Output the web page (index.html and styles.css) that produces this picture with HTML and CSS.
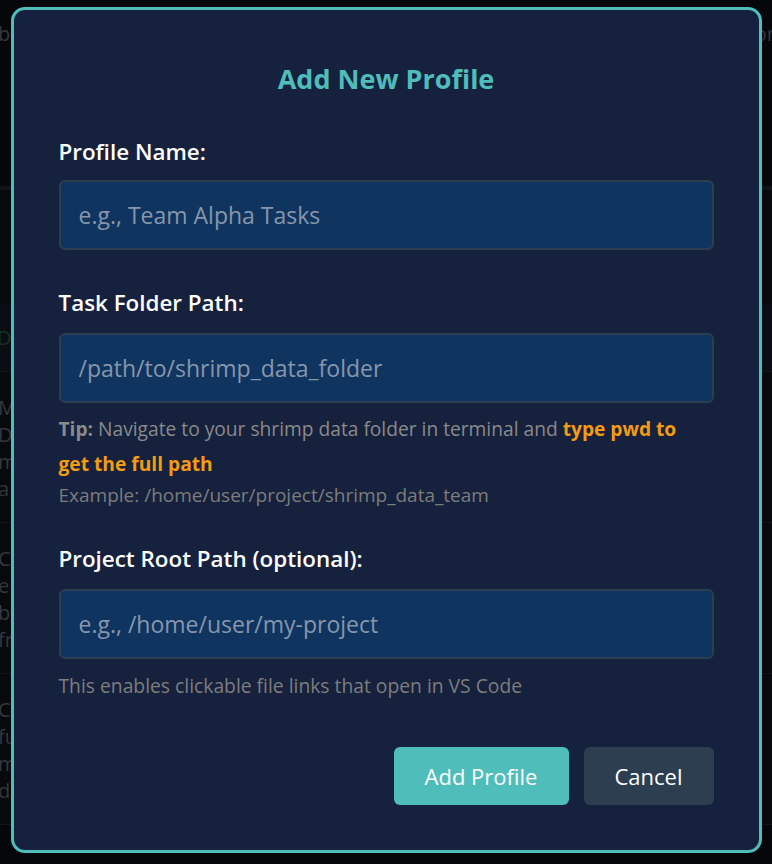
FILE: index.html
```html
<!DOCTYPE html>
<html lang="en">
<head>
<meta charset="utf-8">
<title>Add New Profile</title>
<link rel="stylesheet" href="styles.css">
</head>
<body>
<div class="page">
  <div class="intro">
    <span>b</span>
    <span>or</span>
  </div>
  <div class="panel">
    <div class="panel-head"></div>
    <div class="tab-row"><span class="tab-label">D</span></div>
    <div class="task">
      <p>M</p><p>D</p><p>m</p><p>a</p>
    </div>
    <div class="task">
      <p>C</p><p>e</p><p>b</p><p>fr</p>
    </div>
    <div class="task">
      <p>C</p><p>fu</p><p>m</p><p>d</p>
    </div>
  </div>
  <div class="footer-row">
    <span class="footer-text">Register the new loads on a project</span>
    <span class="footer-btn"></span>
  </div>
</div>

<div class="overlay">
  <div class="modal">
    <h2 class="modal-title">Add New Profile</h2>

    <div class="field">
      <label class="field-label label-first">Profile Name:</label>
      <input class="field-input" type="text" placeholder="e.g., Team Alpha Tasks">
    </div>

    <div class="field">
      <label class="field-label label-second">Task Folder Path:</label>
      <input class="field-input" type="text" placeholder="/path/to/shrimp_data_folder">
      <p class="tip"><strong class="tip-key">Tip:</strong> Navigate to your shrimp data folder in terminal and <strong class="tip-hl">type pwd to get the full path</strong></p>
      <p class="hint">Example: /home/user/project/shrimp_data_team</p>
    </div>

    <div class="field">
      <label class="field-label label-third">Project Root Path (optional):</label>
      <input class="field-input" type="text" placeholder="e.g., /home/user/my-project">
      <p class="hint hint-gap">This enables clickable file links that open in VS Code</p>
    </div>

    <div class="actions">
      <button class="btn btn-primary">Add Profile</button>
      <button class="btn btn-secondary">Cancel</button>
    </div>
  </div>
</div>
</body>
</html>
```

FILE: styles.css
```css
* { box-sizing: border-box; }

html, body {
  margin: 0;
  padding: 0;
  height: 100%;
}

body {
  background: #05070b;
  font-family: "Open Sans", "Noto Sans", "Liberation Sans", sans-serif;
  color: #ffffff;
  overflow: hidden;
}

/* dimmed page behind the dialog */
.page {
  color: #34373d;
  font-size: 20px;
  height: 864px;
  overflow: hidden;
}

.intro {
  display: flex;
  justify-content: space-between;
  padding: 20px 0 0 0;
  height: 186px;
  margin-left: -2px;
  margin-right: -3px;
}

.panel {
  background: #07090d;
  border-top: 4px solid #101319;
}

.panel-head {
  height: 114px;
}

.tab-row {
  background: #0a0d13;
  height: 68px;
  display: flex;
  align-items: center;
  border-bottom: 1px solid #11151b;
}

.tab-label {
  color: #143322;
  margin-left: -3px;
}

.task {
  padding: 22px 0 20px;
  border-bottom: 1px solid #11141a;
}

.task p {
  margin: 0;
  line-height: 27px;
  margin-left: -2px;
}

.footer-row {
  display: flex;
  align-items: flex-start;
  gap: 120px;
  padding-top: 44px;
  height: 60px;
}

.footer-text { white-space: nowrap; }

.footer-btn {
  display: inline-block;
  width: 146px;
  height: 40px;
  margin-top: -2px;
  border-radius: 20px;
  background: #0b2414;
}

/* overlay + dialog */
.overlay {
  position: fixed;
  inset: 0;
  display: flex;
  justify-content: center;
  align-items: flex-start;
  padding-top: 7px;
}

.modal {
  width: 751px;
  height: 846px;
  background: #16213e;
  border: 3px solid #4fbdba;
  border-radius: 14px;
  padding: 51px 45px 0 45px;
}

.modal-title {
  margin: 0;
  text-align: center;
  color: #4fbdba;
  font-size: 27px;
  font-weight: 700;
  line-height: 36px;
}

.field {
  display: flex;
  flex-direction: column;
}

.field-label {
  display: block;
  font-size: 22.4px;
  font-weight: 600;
  color: #ffffff;
  line-height: 30px;
  margin-top: 38px;
  margin-bottom: 15px;
}

.field-label.label-first {
  margin-top: 40px;
  margin-bottom: 13px;
}

.field-label.label-second {
  margin-top: 38px;
}

.field-label.label-third {
  margin-top: 34px;
}

.field-input {
  width: 100%;
  height: 70px;
  background: #0f3460;
  border: 2px solid #2c3e50;
  border-radius: 6px;
  padding: 0 18px;
  font-family: inherit;
  font-size: 23px;
  color: #ffffff;
  outline: none;
}

.field-input::placeholder {
  color: #8796ab;
  opacity: 1;
}

.tip {
  margin: 8px 0 0 0;
  padding-right: 14px;
  font-size: 19.2px;
  line-height: 35px;
  color: #8a8a8a;
}

.tip-key {
  font-weight: 700;
  color: #8a8a8a;
}

.tip-hl {
  font-weight: 700;
  color: #f39c12;
}

.hint {
  margin: 0;
  font-size: 19px;
  line-height: 29px;
  color: #7d7d7d;
}

.hint-gap {
  margin-top: 12px;
  font-size: 19.3px;
}

.actions {
  display: flex;
  justify-content: flex-end;
  gap: 15px;
  margin-top: 47px;
}

.btn {
  height: 58px;
  border: none;
  border-radius: 6px;
  font-family: inherit;
  font-size: 22px;
  color: #ffffff;
  padding: 0 20px;
  cursor: pointer;
}

.btn-primary {
  background: #4fbdba;
  width: 175px;
}

.btn-secondary {
  background: #2c3e50;
  width: 130px;
}
```
